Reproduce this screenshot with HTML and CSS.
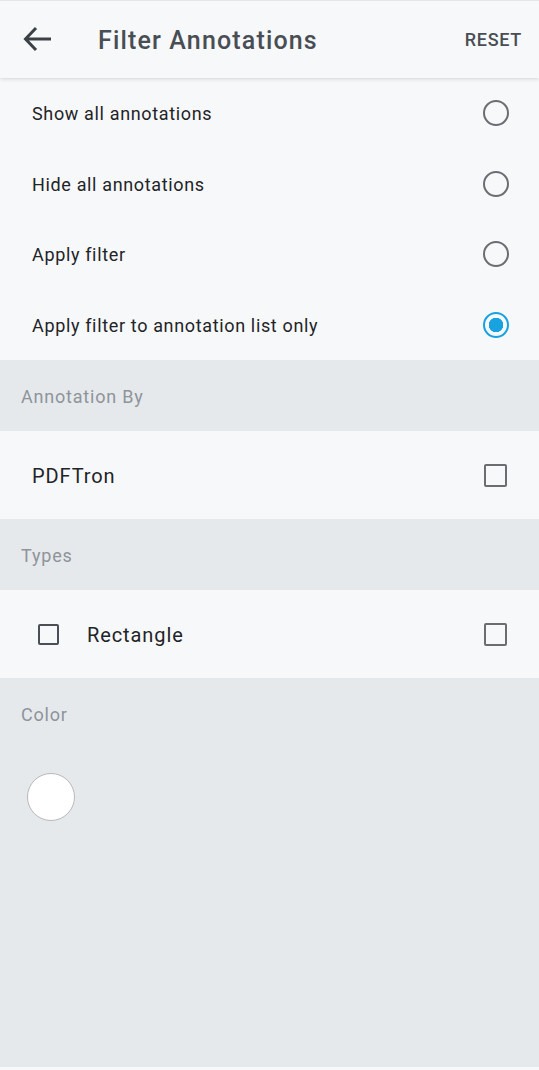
FILE: index.html
```html
<!DOCTYPE html>
<html lang="en">
<head>
  <meta charset="UTF-8">
  <title>Filter Annotations</title>
  <link rel="stylesheet" href="styles.css">
</head>
<body>

  <div class="toolbar">
    <div class="back">
      <svg width="30" height="26" viewBox="0 0 30 26">
        <path d="M28 13H3M13 2L2.5 13L13 24" fill="none" stroke="#3c4146" stroke-width="3"/>
      </svg>
    </div>
    <div class="title">Filter Annotations</div>
    <div class="reset">RESET</div>
  </div>

  <div class="options">
    <div class="row">
      <span class="label">Show all annotations</span>
      <span class="radio"></span>
    </div>
    <div class="row">
      <span class="label">Hide all annotations</span>
      <span class="radio"></span>
    </div>
    <div class="row">
      <span class="label">Apply filter</span>
      <span class="radio"></span>
    </div>
    <div class="row">
      <span class="label">Apply filter to annotation list only</span>
      <span class="radio checked"></span>
    </div>
  </div>

  <div class="section">Annotation By</div>
  <div class="row tall">
    <span class="label">PDFTron</span>
    <span class="check"></span>
  </div>

  <div class="section">Types</div>
  <div class="row tall">
    <span class="label type"><span class="check dark"></span>Rectangle</span>
    <span class="check"></span>
  </div>

  <div class="color-area">
    <div class="section">Color</div>
    <div class="swatches">
      <span class="swatch"></span>
    </div>
  </div>

</body>
</html>
```

FILE: styles.css
```css
body {
  margin: 0;
  font-family: Roboto, "Noto Sans", Arial, sans-serif;
  background: #e6e9ec;
  width: 539px;
  height: 1070px;
  display: flex;
  flex-direction: column;
}

.toolbar {
  height: 77px;
  display: flex;
  align-items: center;
  background: #f7f8fa;
  border-top: 1px solid #e4e7ea;
  box-shadow: 0 1px 4px rgba(0,0,0,0.15);
  position: relative;
  z-index: 1;
}

.back {
  width: 30px;
  height: 26px;
  margin-left: 23px;
  margin-top: -2px;
}

.title {
  margin-left: 45px;
  margin-top: 2px;
  font-size: 25px;
  letter-spacing: 1.15px;
  font-weight: 500;
  color: #494e54;
  flex: 1;
}

.reset {
  margin-right: 17px;
  font-size: 18px;
  letter-spacing: 0.7px;
  font-weight: 500;
  color: #494e54;
}

.options {
  background: #f7f8fa;
}

.row {
  height: 70.5px;
  display: flex;
  align-items: center;
  justify-content: space-between;
  padding: 0 30px 0 32px;
  background: #f7f8fa;
  color: #222427;
  font-size: 18px;
  letter-spacing: 0.65px;
}

.row.tall {
  height: 88px;
  font-size: 20px;
  letter-spacing: 0.9px;
}

.label {
  padding-top: 1px;
}

.type {
  display: flex;
  align-items: center;
}

.radio {
  width: 22px;
  height: 22px;
  border: 2.5px solid #6b6d70;
  border-radius: 50%;
  box-sizing: content-box;
}

.radio.checked {
  border-color: #18a3e0;
  background: radial-gradient(circle, #18a3e0 0, #18a3e0 7px, transparent 7.5px);
}

.check {
  width: 19px;
  height: 19px;
  border: 2.5px solid #6b6d70;
  border-radius: 2px;
  margin-right: 2px;
}

.check.dark {
  width: 17px;
  height: 17px;
  border-color: #4a4f55;
  margin: 0 28px 0 6px;
}

.section {
  height: 71px;
  display: flex;
  align-items: center;
  padding: 2px 0 0 21px;
  box-sizing: border-box;
  font-size: 18px;
  letter-spacing: 0.8px;
  color: #8e949a;
}

.color-area {
  flex: 1;
  border-bottom: 3px solid #f7f8fa;
}

.swatches {
  padding: 24px 0 0 27px;
}

.swatch {
  display: block;
  width: 46px;
  height: 46px;
  border-radius: 50%;
  background: #fff;
  border: 1px solid #b7b9bc;
}
```
